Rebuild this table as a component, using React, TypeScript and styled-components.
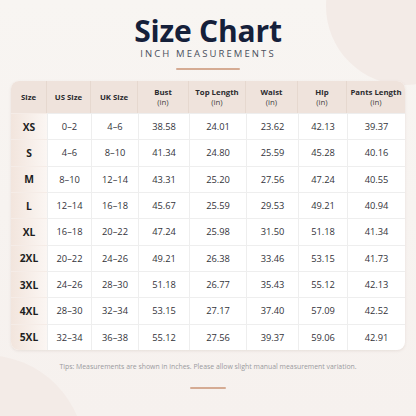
import React from "react";
import styled, { createGlobalStyle } from "styled-components";

const Global = createGlobalStyle`
  html, body { margin: 0; padding: 0; }
  body { font-family: "Open Sans", "Noto Sans", sans-serif; background: #f7f3f0; }
`;

const Page = styled.div`
  position: relative;
  width: 416px;
  height: 416px;
  overflow: hidden;
  background: linear-gradient(180deg, #f8f5f2 0%, #f6f1ee 100%);
  display: flex;
  flex-direction: column;
  align-items: center;
`;

const Blob = styled.div<{ $top: number; $left: number; $size: number }>`
  position: absolute;
  top: ${(p) => p.$top}px;
  left: ${(p) => p.$left}px;
  width: ${(p) => p.$size}px;
  height: ${(p) => p.$size}px;
  border-radius: 50%;
  background: #f3ebe7;
`;

const Content = styled.div`
  position: relative;
  display: flex;
  flex-direction: column;
  align-items: center;
  width: 100%;
`;

const Title = styled.h1`
  margin: 15px 0 0;
  font-size: 30px;
  line-height: 32px;
  font-weight: 700;
  color: #15203a;
  letter-spacing: -0.2px;
`;

const Subtitle = styled.div`
  margin-top: 1px;
  font-size: 9.5px;
  letter-spacing: 2.1px;
  color: #4a4f5c;
  line-height: 12px;
`;

const Rule = styled.div<{ $w: number; $mt: number }>`
  margin-top: ${(p) => p.$mt}px;
  width: ${(p) => p.$w}px;
  height: 2px;
  background: #d5ab93;
  border-radius: 1px;
`;

const Table = styled.div`
  margin-top: 11px;
  width: 394px;
  height: 269px;
  display: grid;
  grid-template-columns: 36px 44px 47px 51px 57px 52px 49px 58px;
  grid-template-rows: 32px repeat(9, 1fr);
  background: #fff;
  border-radius: 8px;
  overflow: hidden;
  box-shadow: 0 1px 3px rgba(120, 90, 70, 0.12);
`;

const Head = styled.div<{ $last?: boolean }>`
  background: #efe3dc;
  display: flex;
  flex-direction: column;
  align-items: center;
  justify-content: center;
  font-size: 7.8px;
  line-height: 10px;
  font-weight: 700;
  color: #2a2a2e;
  border-right: ${(p) => (p.$last ? "none" : "1px solid #e6d8cf")};
  text-align: center;
`;

const Unit = styled.span`
  font-weight: 400;
  color: #444;
`;

const SizeCell = styled.div`
  background: linear-gradient(90deg, #f2e5dd 0%, #fbf6f3 100%);
  display: flex;
  align-items: center;
  justify-content: center;
  font-size: 10.3px;
  font-weight: 700;
  color: #1e1e22;
  border-top: 1px solid #f5ece7;
`;

const Cell = styled.div`
  display: flex;
  align-items: center;
  justify-content: center;
  font-size: 9.3px;
  color: #33333a;
  border-top: 1px solid #eeeeee;
  border-left: 1px solid #eeeeee;
`;

const Tip = styled.div`
  margin-top: 12px;
  font-size: 6.9px;
  color: #9a9a9e;
  line-height: 10px;
`;

const heads: [string, boolean][] = [
  ["Size", false],
  ["US Size", false],
  ["UK Size", false],
  ["Bust", true],
  ["Top Length", true],
  ["Waist", true],
  ["Hip", true],
  ["Pants Length", true],
];

const rows: string[][] = [
  ["XS", "0–2", "4–6", "38.58", "24.01", "23.62", "42.13", "39.37"],
  ["S", "4–6", "8–10", "41.34", "24.80", "25.59", "45.28", "40.16"],
  ["M", "8–10", "12–14", "43.31", "25.20", "27.56", "47.24", "40.55"],
  ["L", "12–14", "16–18", "45.67", "25.59", "29.53", "49.21", "40.94"],
  ["XL", "16–18", "20–22", "47.24", "25.98", "31.50", "51.18", "41.34"],
  ["2XL", "20–22", "24–26", "49.21", "26.38", "33.46", "53.15", "41.73"],
  ["3XL", "24–26", "28–30", "51.18", "26.77", "35.43", "55.12", "42.13"],
  ["4XL", "28–30", "32–34", "53.15", "27.17", "37.40", "57.09", "42.52"],
  ["5XL", "32–34", "36–38", "55.12", "27.56", "39.37", "59.06", "42.91"],
];

export default function App() {
  return (
    <>
      <Global />
      <Page>
        <Blob $top={-73} $left={326} $size={158} />
        <Blob $top={355} $left={-115} $size={200} />
        <Content>
          <Title>Size Chart</Title>
          <Subtitle>INCH MEASUREMENTS</Subtitle>
          <Rule $w={64} $mt={8} />
          <Table>
            {heads.map(([h, unit], i) => (
              <Head key={h} $last={i === heads.length - 1}>
                <span>{h}</span>
                {unit && <Unit>(in)</Unit>}
              </Head>
            ))}
            {rows.map((r) =>
              r.map((v, i) =>
                i === 0 ? (
                  <SizeCell key={r[0] + i}>{v}</SizeCell>
                ) : (
                  <Cell key={r[0] + i}>{v}</Cell>
                )
              )
            )}
          </Table>
          <Tip>Tips: Measurements are shown in inches. Please allow slight manual measurement variation.</Tip>
          <Rule $w={36} $mt={15} />
        </Content>
      </Page>
    </>
  );
}
